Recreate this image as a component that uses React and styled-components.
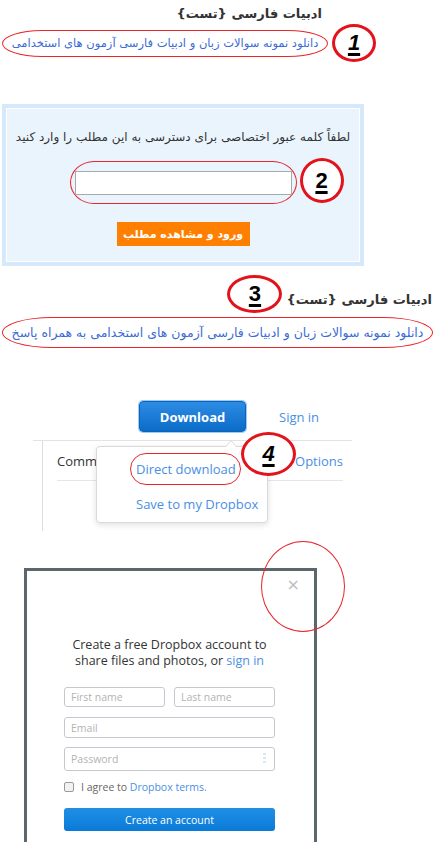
import styled, { createGlobalStyle } from 'styled-components';

const GlobalStyle = createGlobalStyle`
  html, body { margin: 0; padding: 0; background: #fff; }
  body { width: 438px; height: 842px; overflow: hidden; }
`;

const Page = styled.div`
  position: relative;
  width: 438px;
  height: 842px;
  overflow: hidden;
  font-family: "DejaVu Sans", Tahoma, sans-serif;
`;

/* ---------- annotations ---------- */

const Marked = styled.div`
  display: flex;
  align-items: center;
  justify-content: ${p => p.$justify || 'center'};
  box-sizing: border-box;
  width: ${p => p.$w}px;
  height: ${p => p.$h}px;
  padding-left: ${p => p.$pl || 0}px;
  border: 1px solid #e8262c;
  border-radius: ${p => p.$r || 30}px / 50%;
`;

const Badge = styled.span`
  display: flex;
  align-items: center;
  justify-content: center;
  box-sizing: border-box;
  flex: none;
  width: ${p => p.$w || 44}px;
  height: ${p => p.$h || 38}px;
  border: 3px solid #e3131b;
  border-radius: 50%;
  color: #000;
  font-family: "Liberation Sans", Arial, sans-serif;
  font-size: 22px;
  font-weight: bold;
  font-style: ${p => (p.$italic ? 'italic' : 'normal')};
  text-decoration: underline;
  text-decoration-thickness: 3px;
  text-underline-offset: 3px;
  background: #fff;
`;

const FloatBadge = styled(Badge)`
  position: absolute;
  left: ${p => p.$x}px;
  top: ${p => p.$y}px;
`;

const RingNote = styled.div`
  position: absolute;
  left: ${p => p.$x}px;
  top: ${p => p.$y}px;
  width: ${p => p.$w}px;
  height: ${p => p.$h}px;
  border: 1px solid #e8262c;
  border-radius: 50%;
  pointer-events: none;
`;

/* ---------- persian posts ---------- */

const PostTitle = styled.h2`
  margin: ${p => p.$top || 0}px 0 0;
  padding-right: ${p => p.$right || 0}px;
  direction: rtl;
  text-align: right;
  font-size: 13px;
  line-height: 16px;
  font-weight: bold;
  color: #333;
`;

const LinkRow = styled.div`
  display: flex;
  align-items: center;
  gap: 4px;
  margin: ${p => p.$top || 0}px 0 0 2px;
`;

const PostLink = styled.a`
  direction: rtl;
  white-space: nowrap;
  font-size: ${p => p.$size || 12}px;
  color: #3b6bd6;
  text-decoration: none;
`;

const TitleRow = styled.div`
  display: flex;
  justify-content: flex-end;
  align-items: flex-end;
  gap: 4px;
  margin-top: 9px;
  padding-right: 6px;
  ${PostTitle} { padding-bottom: 5px; }
`;

/* ---------- password box ---------- */

const LockBox = styled.div`
  box-sizing: border-box;
  width: 362px;
  height: 162px;
  margin: 42px 0 0 2px;
  padding: 21px 0 0;
  border: 4px solid #d5e9fb;
  box-shadow: inset 0 0 0 1px #fff;
  background: #eaf4fd;
  display: flex;
  flex-direction: column;
  align-items: center;
`;

const LockText = styled.p`
  margin: 0;
  direction: rtl;
  font-size: 12px;
  line-height: 16px;
  color: #333;
`;

const FieldWrap = styled.div`
  position: relative;
  margin-top: 16px;
`;

const PassInput = styled.input`
  box-sizing: border-box;
  width: 217px;
  height: 24px;
  border: 1px solid #a9a9a9;
  background: #fff;
  outline: none;
`;

const OrangeButton = styled.button`
  margin-top: 18px;
  width: 133px;
  height: 24px;
  border: 0;
  padding: 0;
  background: #ff8000;
  color: #fff;
  direction: rtl;
  font-family: "DejaVu Sans", Tahoma, sans-serif;
  font-size: 11px;
  font-weight: bold;
`;

/* ---------- dropbox download ---------- */

const DropSection = styled.div`
  position: relative;
  margin-top: 53px;
  font-family: "Open Sans", "Noto Sans", sans-serif;
`;

const TopBar = styled.div`
  display: flex;
  align-items: center;
  gap: 33px;
  height: 31px;
  padding-left: 139px;
`;

const DownloadButton = styled.button`
  box-sizing: border-box;
  width: 107px;
  height: 31px;
  border: 1px solid #0a63bd;
  border-radius: 4px;
  box-shadow: 0 0 0 1px #9ccbf3;
  background: linear-gradient(#2d8ce3, #0b6cc8);
  color: #fff;
  font-family: "Open Sans", "Noto Sans", sans-serif;
  font-size: 13px;
  font-weight: bold;
`;

const BlueText = styled.a`
  color: #4a8fe3;
  font-size: ${p => p.$size || 13}px;
  text-decoration: none;
  white-space: nowrap;
`;

const Panel = styled.div`
  width: 319px;
  height: 90px;
  margin: 8px 0 0 33px;
  border-top: 1px solid #e3e3e3;
`;

const PanelBody = styled.div`
  height: 100%;
  margin-left: 9px;
  padding: 0 9px 0 14px;
  border-left: 1px solid #dcdcdc;
`;

const TabRow = styled.div`
  display: flex;
  align-items: center;
  justify-content: space-between;
  height: 39px;
  border-bottom: 1px solid #e6e6e6;
  font-size: 13px;
  color: #333;
`;

const Menu = styled.div`
  position: absolute;
  left: 96px;
  top: 45px;
  box-sizing: border-box;
  width: 172px;
  height: 77px;
  padding: 6px 0 0 33px;
  background: #fff;
  border: 1px solid #d9d9d9;
  border-radius: 4px;
  box-shadow: 0 2px 6px rgba(0, 0, 0, 0.12);

  &::before, &::after {
    content: "";
    position: absolute;
    left: 128px;
    border: 6px solid transparent;
    border-top: 0;
  }
  &::before { top: -7px; border-bottom: 7px solid #d9d9d9; }
  &::after { top: -6px; border-bottom: 7px solid #fff; }
`;

const MenuItem = styled(BlueText)`
  display: block;
  margin: ${p => p.$top || 0}px 0 0 ${p => p.$left || 0}px;
  line-height: 16px;
`;

/* ---------- sign up modal ---------- */

const Modal = styled.div`
  position: relative;
  box-sizing: border-box;
  width: 293px;
  height: 300px;
  margin: 37px 0 0 24px;
  border: 3px solid #5c666d;
  border-bottom: 0;
  padding: 66px 0 0 37px;
  background: #fff;
  font-family: "Open Sans", "Noto Sans", sans-serif;
`;

const Close = styled.span`
  position: absolute;
  right: 14px;
  top: 4px;
  font-size: 16px;
  color: #bdbdbd;
  font-family: "DejaVu Sans", sans-serif;
`;

const ModalHeading = styled.p`
  width: 219px;
  margin: 0 0 0 -4px;
  text-align: center;
  font-size: 12.5px;
  line-height: 16px;
  color: #333;
`;

const Form = styled.div`
  width: 211px;
  margin-top: 18px;
  display: flex;
  flex-direction: column;
`;

const FieldRow = styled.div`
  display: flex;
  gap: 9px;
  margin-top: ${p => p.$top || 0}px;
`;

const TextField = styled.div`
  flex: 1;
  box-sizing: border-box;
  height: ${p => p.$h || 21}px;
  display: flex;
  align-items: center;
  justify-content: space-between;
  padding: 0 8px 0 6px;
  border: 1px solid #c5c9cd;
  border-radius: 3px;
  font-size: 10.5px;
  color: #b3b3b3;
`;

const Dots = styled.span`
  width: 3px;
  height: 12px;
  background: repeating-linear-gradient(#d6e8f7 0 2px, transparent 2px 4px);
`;

const AgreeRow = styled.label`
  display: flex;
  align-items: center;
  gap: 7px;
  margin-top: 10px;
  height: 12px;
  font-size: 10.5px;
  color: #666;
`;

const Check = styled.span`
  box-sizing: border-box;
  width: 10px;
  height: 10px;
  border: 1px solid #9a9a9a;
  border-radius: 2px;
  background: #f2f2f2;
`;

const CreateButton = styled.button`
  margin-top: 15px;
  height: 23px;
  border: 0;
  border-radius: 3px;
  background: linear-gradient(#1f8fe5, #0a7ad8);
  color: #fff;
  font-family: "Open Sans", "Noto Sans", sans-serif;
  font-size: 10.5px;
`;

export default function App() {
  return (
    <Page>
      <GlobalStyle />

      <PostTitle $top={6} $right={116}>ادبیات فارسی {'{تست}'}</PostTitle>
      <LinkRow $top={2}>
        <Marked $w={326} $h={27} $r={40}>
          <PostLink $size={11.5}>دانلود نمونه سوالات زبان و ادبیات فارسی آزمون های استخدامی</PostLink>
        </Marked>
        <Badge $italic>1</Badge>
      </LinkRow>

      <LockBox>
        <LockText>لطفاً کلمه عبور اختصاصی برای دسترسی به این مطلب را وارد کنید</LockText>
        <FieldWrap>
          <Marked $w={227} $h={43} $r={24}>
            <PassInput type="text" />
          </Marked>
          <FloatBadge $x={230} $y={-3} $h={45}>2</FloatBadge>
        </FieldWrap>
        <OrangeButton>ورود و مشاهده مطلب</OrangeButton>
      </LockBox>

      <TitleRow>
        <Badge $w={55}>3</Badge>
        <PostTitle>ادبیات فارسی {'{تست}'}</PostTitle>
      </TitleRow>
      <LinkRow $top={4}>
        <Marked $w={431} $h={31} $r={50}>
          <PostLink $size={12.5}>دانلود نمونه سوالات زبان و ادبیات فارسی آزمون های استخدامی به همراه پاسخ</PostLink>
        </Marked>
      </LinkRow>

      <DropSection>
        <TopBar>
          <DownloadButton>Download</DownloadButton>
          <BlueText>Sign in</BlueText>
        </TopBar>
        <Panel>
          <PanelBody>
            <TabRow>
              <span>Comments</span>
              <BlueText>Options</BlueText>
            </TabRow>
          </PanelBody>
        </Panel>
        <Menu>
          <Marked $w={111} $h={32} $r={16} $justify="flex-start" $pl={5}>
            <MenuItem>Direct download</MenuItem>
          </Marked>
          <MenuItem $top={11} $left={6}>Save to my Dropbox</MenuItem>
        </Menu>
        <FloatBadge $x={241} $y={31} $w={55} $h={44} $italic>4</FloatBadge>
      </DropSection>

      <Modal>
        <Close>×</Close>
        <RingNote $x={234} $y={-30} $w={82} $h={89} />
        <ModalHeading>
          Create a free Dropbox account to share files and photos, or <BlueText $size={12.5}>sign in</BlueText>
        </ModalHeading>
        <Form>
          <FieldRow>
            <TextField $h={20}>First name</TextField>
            <TextField $h={20}>Last name</TextField>
          </FieldRow>
          <FieldRow $top={10}>
            <TextField>Email</TextField>
          </FieldRow>
          <FieldRow $top={9}>
            <TextField $h={24}>Password<Dots /></TextField>
          </FieldRow>
          <AgreeRow>
            <Check />
            <span>I agree to <BlueText $size={10.5}>Dropbox terms.</BlueText></span>
          </AgreeRow>
          <CreateButton>Create an account</CreateButton>
        </Form>
      </Modal>
    </Page>
  );
}
